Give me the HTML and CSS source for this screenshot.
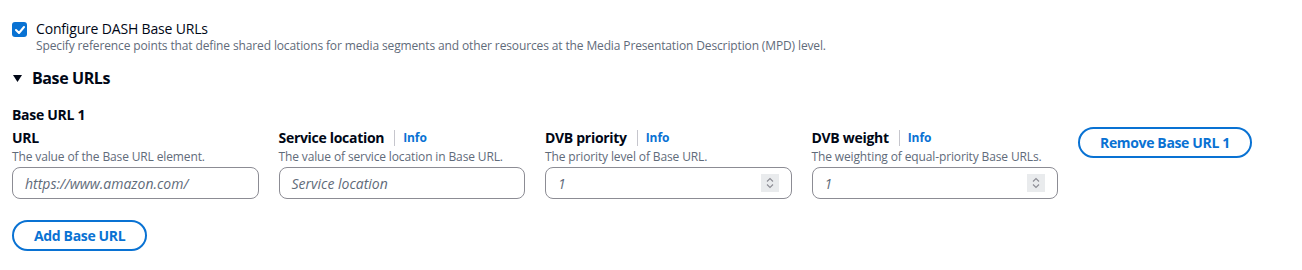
FILE: index.html
```html
<!DOCTYPE html>
<html lang="en">
<head>
<meta charset="UTF-8">
<meta name="viewport" content="width=device-width, initial-scale=1.0">
<title>Base URLs</title>
<link rel="stylesheet" href="styles.css">
</head>
<body>
<div class="page">
  <label class="checkbox-field">
    <span class="checkbox">
      <svg width="10" height="8" viewBox="0 0 10 8"><path d="M1 4l3 3 5-6" fill="none" stroke="#fff" stroke-width="2" stroke-linecap="round" stroke-linejoin="round"/></svg>
    </span>
    <span class="checkbox-text">
      <span class="checkbox-label">Configure DASH Base URLs</span>
      <span class="checkbox-desc">Specify reference points that define shared locations for media segments and other resources at the Media Presentation Description (MPD) level.</span>
    </span>
  </label>

  <div class="section-header">
    <svg class="caret" width="9" height="7" viewBox="0 0 9 7"><path d="M0 0h9L4.5 7z" fill="#000716"/></svg>
    <h2>Base URLs</h2>
  </div>

  <h3 class="group-title">Base URL 1</h3>
  <div class="fields">
    <div class="field">
      <div class="field-label"><span>URL</span></div>
      <div class="field-desc">The value of the Base URL element.</div>
      <div class="input"><span class="placeholder">https://www.amazon.com/</span></div>
    </div>
    <div class="field">
      <div class="field-label"><span>Service location</span><span class="divider"></span><a class="info">Info</a></div>
      <div class="field-desc">The value of service location in Base URL.</div>
      <div class="input"><span class="placeholder">Service location</span></div>
    </div>
    <div class="field">
      <div class="field-label"><span>DVB priority</span><span class="divider"></span><a class="info">Info</a></div>
      <div class="field-desc">The priority level of Base URL.</div>
      <div class="input number"><span class="placeholder">1</span>
        <span class="spinner"><svg width="8" height="12" viewBox="0 0 8 12"><path d="M1 4.5l3-3 3 3M1 7.5l3 3 3-3" fill="none" stroke="#8c8c94" stroke-width="1.1"/></svg></span>
      </div>
    </div>
    <div class="field">
      <div class="field-label"><span>DVB weight</span><span class="divider"></span><a class="info">Info</a></div>
      <div class="field-desc">The weighting of equal-priority Base URLs.</div>
      <div class="input number"><span class="placeholder">1</span>
        <span class="spinner"><svg width="8" height="12" viewBox="0 0 8 12"><path d="M1 4.5l3-3 3 3M1 7.5l3 3 3-3" fill="none" stroke="#8c8c94" stroke-width="1.1"/></svg></span>
      </div>
    </div>
    <div class="field remove">
      <button class="btn">Remove Base URL 1</button>
    </div>
  </div>

  <button class="btn add">Add Base URL</button>
</div>
</body>
</html>
```
FILE: styles.css
```css
body {
  margin: 0;
  font-family: "Open Sans", Arial, sans-serif;
  color: #000716;
  background: #fff;
}
.page {
  padding: 20px 12px;
}
.checkbox-field {
  display: flex;
  gap: 9px;
}
.checkbox {
  width: 15px;
  height: 15px;
  margin-top: 2px;
  border-radius: 3px;
  background: #0972d3;
  display: flex;
  align-items: center;
  justify-content: center;
  flex-shrink: 0;
}
.checkbox-text {
  display: flex;
  flex-direction: column;
}
.checkbox-label {
  font-size: 14px;
  line-height: 18px;
  letter-spacing: -0.17px;
}
.checkbox-desc {
  font-size: 12px;
  line-height: 16px;
  color: #5f6b7a;
  letter-spacing: -0.13px;
}
.section-header {
  display: flex;
  align-items: center;
  gap: 10px;
  margin-top: 13px;
  padding-left: 1px;
}
.section-header h2 {
  margin: 0;
  font-size: 16px;
  line-height: 22px;
  font-weight: 700;
  letter-spacing: -0.4px;
}
.group-title {
  margin: 16px 0 0;
  font-size: 14px;
  line-height: 20px;
  font-weight: 700;
  letter-spacing: -0.3px;
}
.fields {
  display: grid;
  grid-template-columns: repeat(4, 246.5px) auto;
  column-gap: 20px;
  margin-top: 2px;
}
.field-label {
  display: flex;
  align-items: center;
  font-size: 14px;
  line-height: 22px;
  font-weight: 700;
  letter-spacing: -0.3px;
}
.divider {
  width: 1px;
  height: 16px;
  background: #c6c6cd;
  margin: 0 8px 0 10px;
}
.info {
  font-size: 12px;
  color: #0972d3;
  letter-spacing: -0.1px;
}
.field-desc {
  font-size: 12px;
  line-height: 16px;
  color: #5f6b7a;
  letter-spacing: -0.13px;
}
.input {
  margin-top: 2px;
  height: 32px;
  box-sizing: border-box;
  border: 1px solid #8c8c94;
  border-radius: 8px;
  padding: 0 12px;
  display: flex;
  align-items: center;
  justify-content: space-between;
}
.placeholder {
  font-size: 14px;
  font-style: italic;
  color: #5f6b7a;
}
.spinner {
  width: 18px;
  height: 18px;
  background: #e9ebed;
  display: flex;
  align-items: center;
  justify-content: center;
}
.btn {
  font-family: inherit;
  font-size: 14px;
  font-weight: 700;
  letter-spacing: -0.35px;
  color: #0972d3;
  background: #fff;
  border: 2px solid #0972d3;
  border-radius: 20px;
  height: 31px;
  padding: 0 20px;
  cursor: pointer;
}
.add {
  margin-top: 21px;
}
```
